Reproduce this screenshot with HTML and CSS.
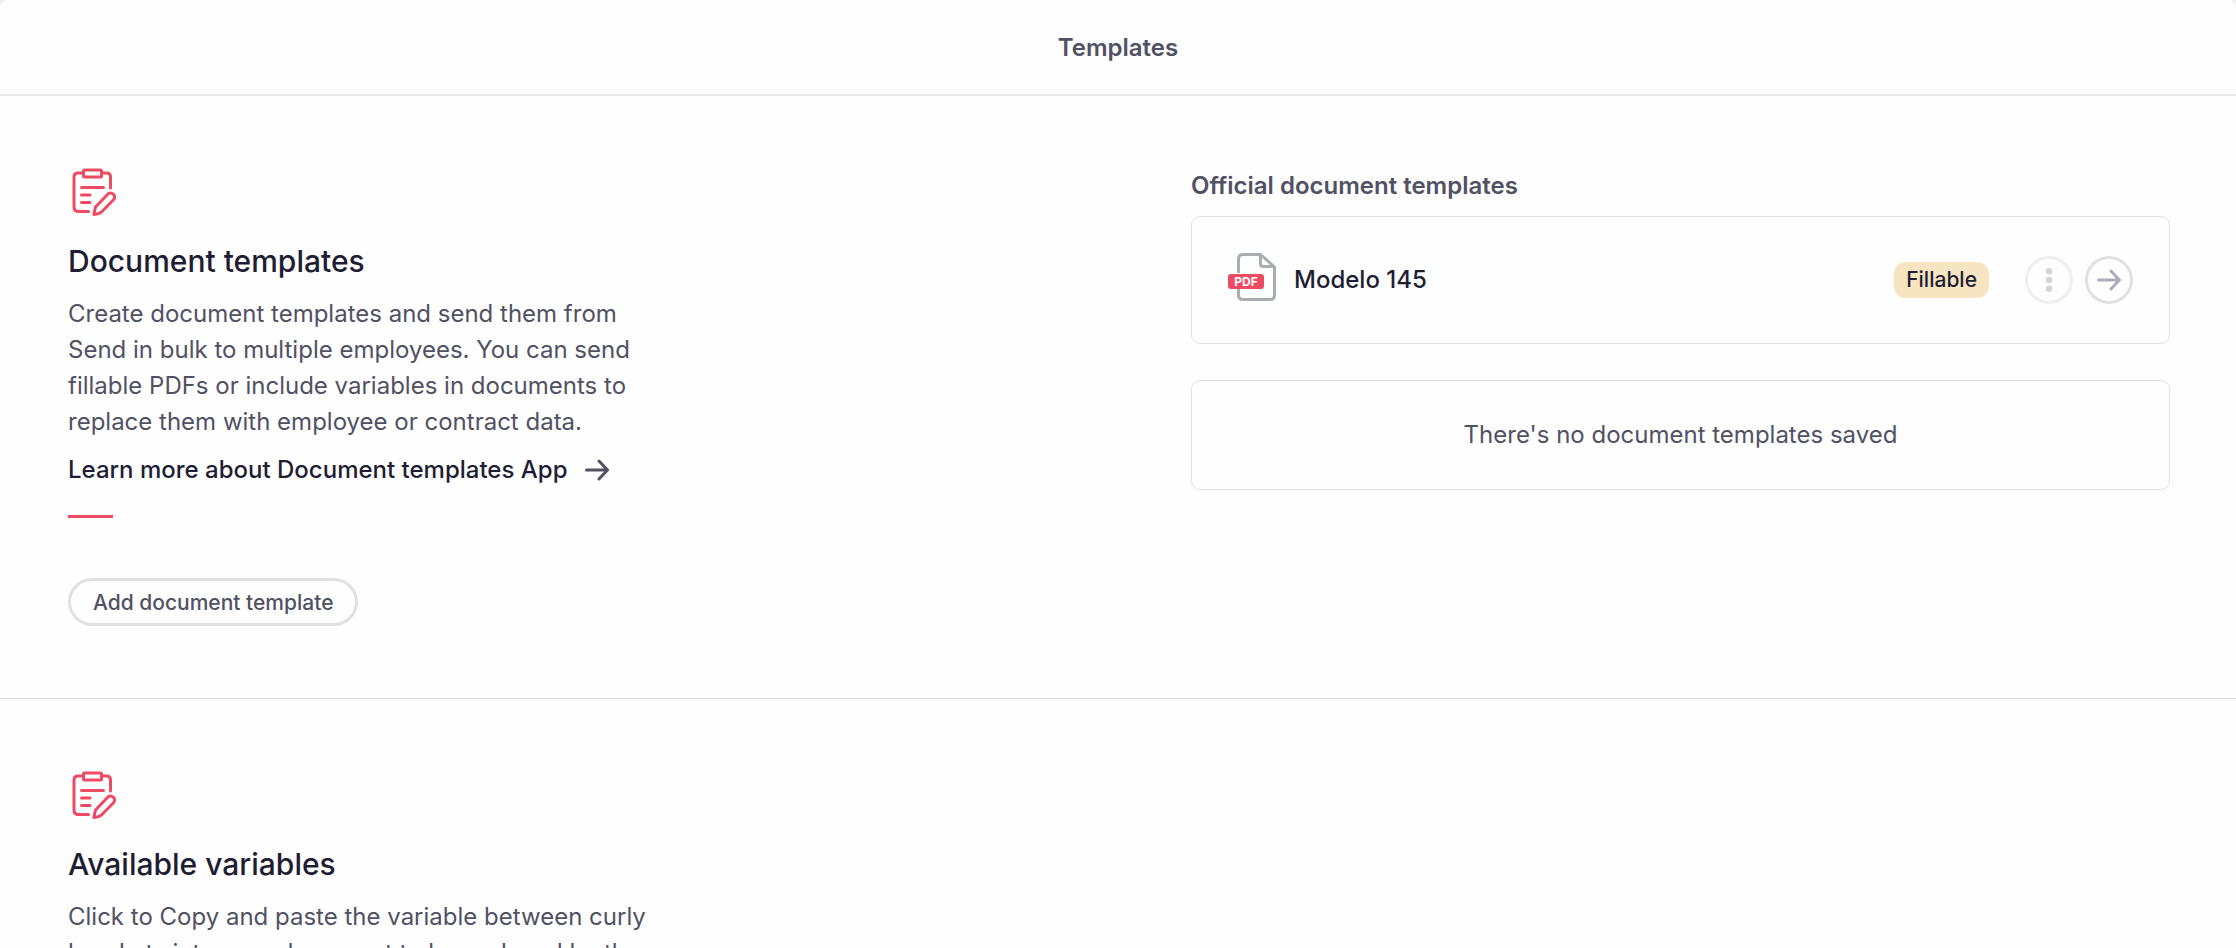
FILE: index.html
```html
<!DOCTYPE html>
<html lang="en">
<head>
  <meta charset="UTF-8">
  <meta name="viewport" content="width=device-width, initial-scale=1.0">
  <title>Templates</title>
  <link rel="stylesheet" href="styles.css">
</head>
<body>
  <!-- shared icons -->
  <svg class="sprite" aria-hidden="true">
    <symbol id="icon-clipboard" viewBox="0 0 48 48">
      <g fill="none" stroke="currentColor" stroke-width="3" stroke-linecap="round" stroke-linejoin="round">
        <rect x="15.500" y="2" width="18" height="7" rx="1"/>
        <path d="M15.500 5H10C7.500 5 6 6.500 6 9V39C6 42 7.500 43.500 10.500 43.500H20.500"/>
        <path d="M33.500 5H38.500C41 5 42.500 6.500 42.500 9V20"/>
        <path d="M13.500 19.500H35.500M13.500 27H22M13.500 34.500H22"/>
        <path d="M25.800 46.500L27.500 39L39.500 26.500C41 24.500 43.500 24.500 45 26C47 27.500 47.300 30 45.300 32L34 43.500Q31 46.300 25.800 46.500Z"/>
      </g>
    </symbol>
    <symbol id="icon-arrow" viewBox="0 0 24 24">
      <path d="M1.500 12H22M14 3L22.500 12L14 21" fill="none" stroke="currentColor" stroke-width="3" stroke-linecap="round" stroke-linejoin="round"/>
    </symbol>
  </svg>

  <div class="page">
    <header class="page-header">
      <h1 class="page-header__title">Templates</h1>
    </header>

    <main>
      <section class="section">
        <div class="section__info">
          <svg class="section__icon" aria-hidden="true"><use href="#icon-clipboard"/></svg>
          <h2 class="section__title">Document templates</h2>
          <p class="section__text">Create document templates and send them from<br>Send in bulk to multiple employees. You can send<br>fillable PDFs or include variables in documents to<br>replace them with employee or contract data.</p>
          <a class="section__link" href="#">Learn more about Document templates App
            <svg class="section__arrow" aria-hidden="true"><use href="#icon-arrow"/></svg>
          </a>
          <div class="section__dash"></div>
          <button class="button" type="button">Add document template</button>
        </div>

        <div class="section__content">
          <h3 class="list-title">Official document templates</h3>
          <div class="card card--template">
            <svg class="card__file" viewBox="0 0 48 54" aria-hidden="true">
              <path d="M10.500 20V6C10.500 3 12 1.500 15 1.500H32.500L46.500 14V42C46.500 45 45 46.500 42 46.500H15C12 46.500 10.500 45 10.500 42V34" fill="none" stroke="#a9aeb2" stroke-width="3" stroke-linejoin="round"/>
              <path d="M32.500 2V11C32.500 12.500 33.500 13.500 35 13.500H46" fill="none" stroke="#a9aeb2" stroke-width="3"/>
              <rect y="21" width="36" height="15" rx="3" fill="#ed4a63"/>
              <text class="card__file-type" x="18" y="33" text-anchor="middle">PDF</text>
            </svg>
            <span class="card__name">Modelo 145</span>
            <span class="badge">Fillable</span>
            <div class="card__actions">
              <button class="round-button" type="button" aria-label="More options" disabled>
                <svg class="round-button__icon" viewBox="0 0 24 24" aria-hidden="true">
                  <g fill="currentColor"><circle cx="12" cy="3.300" r="3.300"/><circle cx="12" cy="12" r="3.300"/><circle cx="12" cy="20.700" r="3.300"/></g>
                </svg>
              </button>
              <button class="round-button" type="button" aria-label="Open template">
                <svg class="round-button__icon" aria-hidden="true"><use href="#icon-arrow"/></svg>
              </button>
            </div>
          </div>
          <div class="card card--empty">There's no document templates saved</div>
        </div>
      </section>

      <section class="section">
        <div class="section__info">
          <svg class="section__icon" aria-hidden="true"><use href="#icon-clipboard"/></svg>
          <h2 class="section__title">Available variables</h2>
          <p class="section__text">Click to Copy and paste the variable between curly<br>brackets into your document to be replaced by the</p>
        </div>
      </section>
    </main>
  </div>
</body>
</html>
```
FILE: styles.css
```css
* {
  box-sizing: border-box;
}

body {
  margin: 0;
  height: 100vh;
  overflow: hidden;
  background: #f0f0f1;
  color: #515164;
  font-family: Inter, "Liberation Sans", sans-serif;
  font-size: 24px;
  line-height: 36px;
}

h1,
h2,
h3,
p {
  margin: 0;
}

button {
  font-family: inherit;
  color: inherit;
  background: none;
  cursor: pointer;
}

.sprite {
  display: none;
}

.page {
  min-height: 100vh;
  background: #fefefe;
  border-radius: 8px 8px 0 0;
}

.page-header {
  padding: 30px 30px 28px;
  border-bottom: 2px solid #e9e9ea;
  text-align: center;
}

.page-header__title,
.list-title {
  font-size: 24px;
  font-weight: 600;
}

/* Sections */
.section {
  display: grid;
  grid-template-columns: 1fr 1fr;
  column-gap: 144px;
  padding: 72px 66px 72px 68px;
}

.section + .section {
  border-top: 1px solid #dcdcde;
}

.section__info {
  display: flex;
  flex-direction: column;
  align-items: flex-start;
}

.section__icon {
  width: 48px;
  height: 48px;
  color: #ed4a63;
}

.section__title {
  margin: 24px 0 14px;
  color: #1f1d33;
  font-size: 30px;
  font-weight: 500;
  line-height: 42px;
}

.section__link {
  display: flex;
  align-items: center;
  gap: 18px;
  margin-top: 12px;
  color: #1f1d33;
  font-weight: 500;
  text-decoration: none;
}

.section__arrow {
  width: 24px;
  height: 24px;
  color: #515164;
}

.section__dash {
  width: 45px;
  height: 3px;
  margin: 27px 0 60px;
  background: #ed4a63;
}

.button {
  height: 48px;
  padding: 0 22px;
  border: 3px solid #e1e1e3;
  border-radius: 24px;
  font-size: 21px;
  font-weight: 500;
}

/* Cards */
.list-title {
  margin-bottom: 12px;
}

.card {
  display: flex;
  align-items: center;
  padding: 36px;
  border: 1px solid #e1e1e3;
  border-radius: 9px;
}

.card + .card {
  margin-top: 36px;
}

.card--empty {
  justify-content: center;
}

.card__file {
  width: 48px;
  height: 54px;
}

.card__file-type {
  fill: #fff;
  font-size: 12px;
  font-weight: 700;
}

.card__name {
  flex: 1;
  margin-left: 18px;
  color: #1f1d33;
  font-weight: 500;
}

.badge {
  padding: 0 12px;
  border-radius: 12px;
  background: #f7e4c1;
  color: #1f1d33;
  font-size: 21px;
  font-weight: 500;
}

.card__actions {
  display: flex;
  gap: 12px;
  margin-left: 36px;
}

.round-button {
  display: flex;
  align-items: center;
  justify-content: center;
  width: 48px;
  height: 48px;
  padding: 0;
  border: 3px solid #e1e1e3;
  border-radius: 50%;
  color: #aeacb8;
}

.round-button:disabled {
  opacity: 0.5;
  cursor: default;
}

.round-button__icon {
  width: 24px;
  height: 24px;
}
```
